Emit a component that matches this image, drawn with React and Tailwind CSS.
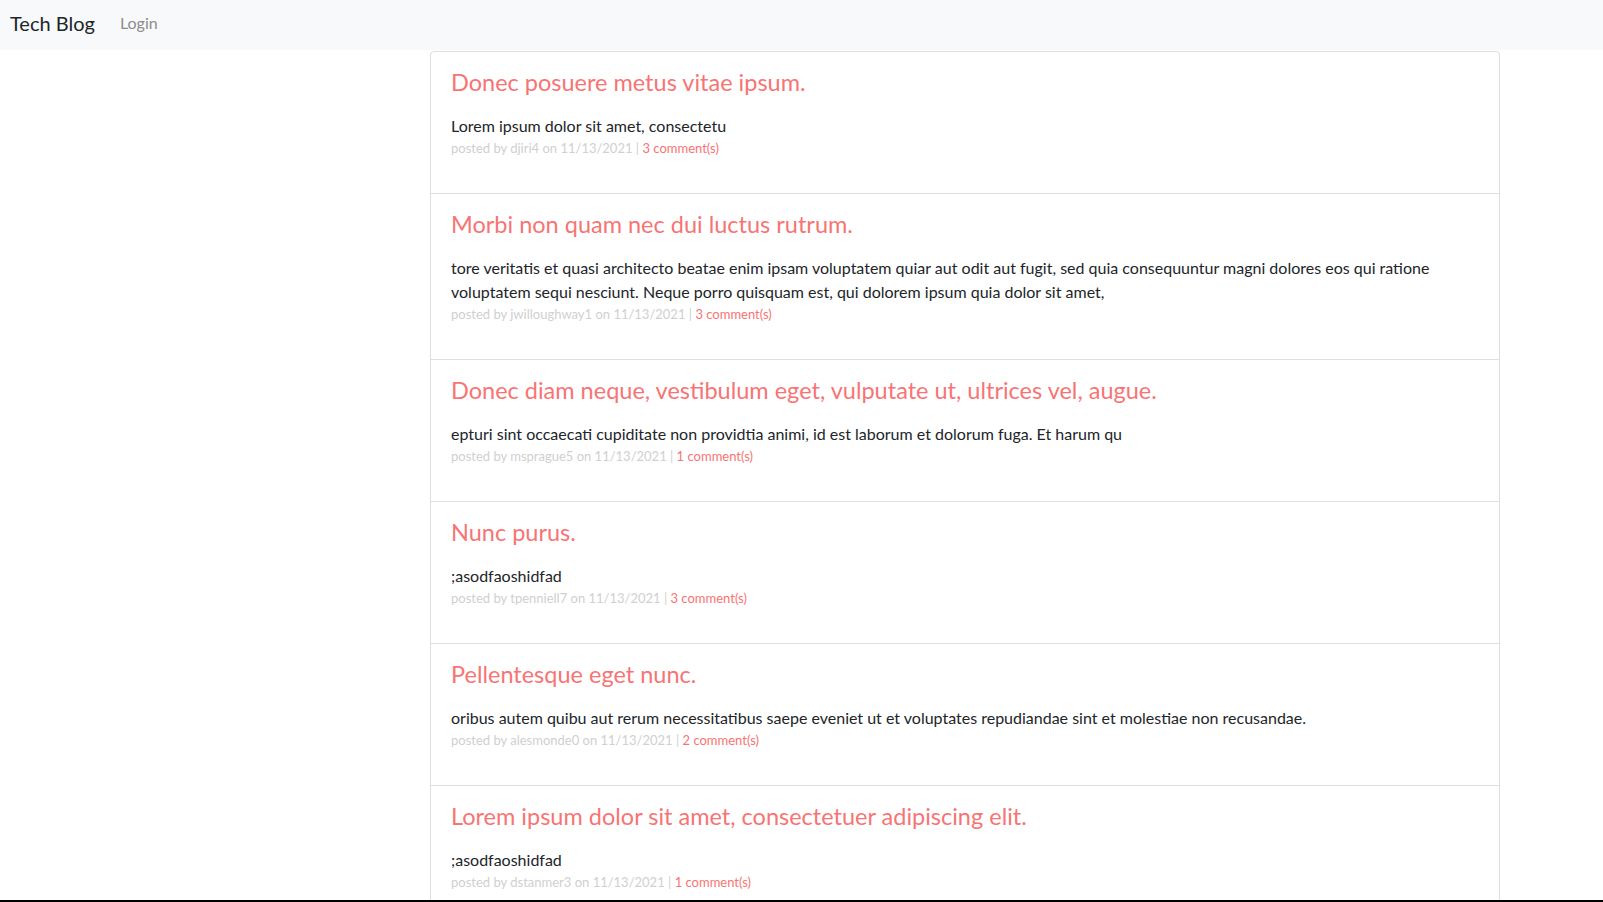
const posts = [
  {
    title: "Donec posuere metus vitae ipsum.",
    body: ["Lorem ipsum dolor sit amet, consectetu"],
    user: "djiri4",
    date: "11/13/2021",
    comments: 3,
  },
  {
    title: "Morbi non quam nec dui luctus rutrum.",
    body: [
      "tore veritatis et quasi architecto beatae enim ipsam voluptatem quiar aut odit aut fugit, sed quia consequuntur magni dolores eos qui ratione",
      "voluptatem sequi nesciunt. Neque porro quisquam est, qui dolorem ipsum quia dolor sit amet,",
    ],
    user: "jwilloughway1",
    date: "11/13/2021",
    comments: 3,
  },
  {
    title: "Donec diam neque, vestibulum eget, vulputate ut, ultrices vel, augue.",
    body: ["epturi sint occaecati cupiditate non providtia animi, id est laborum et dolorum fuga. Et harum qu"],
    user: "msprague5",
    date: "11/13/2021",
    comments: 1,
  },
  {
    title: "Nunc purus.",
    body: [";asodfaoshidfad"],
    user: "tpenniell7",
    date: "11/13/2021",
    comments: 3,
  },
  {
    title: "Pellentesque eget nunc.",
    body: ["oribus autem quibu aut rerum necessitatibus saepe eveniet ut et voluptates repudiandae sint et molestiae non recusandae."],
    user: "alesmonde0",
    date: "11/13/2021",
    comments: 2,
  },
  {
    title: "Lorem ipsum dolor sit amet, consectetuer adipiscing elit.",
    body: [";asodfaoshidfad"],
    user: "dstanmer3",
    date: "11/13/2021",
    comments: 1,
  },
];

function PostItem({ post, first }) {
  return (
    <div className={`px-5 pt-4 pb-[34px] ${first ? "" : "border-t border-[#dfdfdf]"}`}>
      <h4 className="text-[23.5px] leading-[29px] mb-[17px] text-[#f87474]">{post.title}</h4>
      <p className="text-base leading-6 text-[#212529]">
        {post.body.map((line, i) => (
          <span key={i} className="block whitespace-nowrap">
            {line}
          </span>
        ))}
      </p>
      <p className="text-[13px] leading-[21px] text-[#d0d0d0]">
        posted by {post.user} on {post.date} |{" "}
        <a href="#" className="text-[#f87474]">
          {post.comments} comment(s)
        </a>
      </p>
    </div>
  );
}

export default function App() {
  return (
    <div className="min-h-screen bg-white" style={{ fontFamily: 'Lato, "Open Sans", sans-serif' }}>
      <nav className="h-[50px] bg-[#f8f9fa] flex items-center px-[10px] pb-1">
        <span className="text-[20px] text-[#212529] mr-[25px]">Tech Blog</span>
        <a href="#" className="text-base text-[#8c8c8c]">Login</a>
      </nav>
      <main className="ml-[430px] w-[1070px] mt-px border border-[#dfdfdf] rounded-t">
        {posts.map((p, i) => (
          <PostItem key={i} post={p} first={i === 0} />
        ))}
      </main>
      <div className="fixed bottom-0 left-0 right-0 h-[2px] bg-black" />
    </div>
  );
}
